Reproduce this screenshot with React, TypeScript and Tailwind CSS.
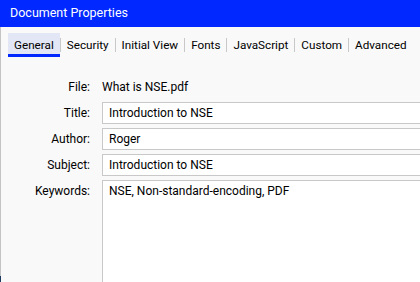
import React from 'react'

const tabs = ['General', 'Security', 'Initial View', 'Fonts', 'JavaScript', 'Custom', 'Advanced']

const fields = [
  { label: 'Title:', value: 'Introduction to NSE' },
  { label: 'Author:', value: 'Roger' },
  { label: 'Subject:', value: 'Introduction to NSE' },
]

export default function App() {
  return (
    <div className="flex h-[282px] w-[420px] flex-col overflow-hidden whitespace-nowrap bg-[#f9f9f9] font-['Roboto',sans-serif] text-[12px] text-black">
      {/* Title bar */}
      <div className="flex h-[27px] shrink-0 items-center bg-[#0028ff] pl-[10px] text-[12.5px] text-white">
        Document Properties
      </div>

      <div className="relative flex flex-1 flex-col border-l border-[#c4c4c4]">
        {/* Tabs */}
        <div className="mt-[6px] flex h-[24px] items-stretch pl-[7px] text-[11.7px]">
          {tabs.map((tab, i) => (
            <React.Fragment key={tab}>
              {i > 0 && <div className="my-[5px] w-px bg-[#c8c8c8]" />}
              <div
                className={`flex items-center border-b-[3px] px-[6px] pt-[5px] ${
                  i === 0 ? 'border-[#0028ff] bg-[#e3e6f4]' : 'border-transparent'
                }`}
              >
                {tab}
              </div>
            </React.Fragment>
          ))}
        </div>

        {/* Form */}
        <div className="mt-[19px] flex flex-1 flex-col gap-[4px]">
          <div className="flex h-[22px] items-center">
            <div className="w-[90px] pr-[1px] text-right">File:</div>
            <div className="ml-[11px]">What is NSE.pdf</div>
          </div>
          {fields.map((f) => (
            <div key={f.label} className="flex h-[22px] items-center">
              <div className="w-[90px] pr-[1px] text-right">{f.label}</div>
              <div className="-mr-[10px] ml-[11px] flex h-[22px] flex-1 items-center border border-[#c8c8c8] bg-white pl-[6px]">
                {f.value}
              </div>
            </div>
          ))}
          <div className="flex flex-1 items-start">
            <div className="flex h-[22px] w-[90px] items-center justify-end pr-[1px]">Keywords:</div>
            <div className="-mb-[10px] -mr-[10px] ml-[11px] flex-1 self-stretch border border-[#c8c8c8] bg-white pl-[6px] leading-[20px]">
              NSE, Non-standard-encoding, PDF
            </div>
          </div>
        </div>
        <div className="absolute bottom-0 left-[-1px] h-[6px] w-px bg-[#1d3a5c]" />
      </div>
    </div>
  )
}
